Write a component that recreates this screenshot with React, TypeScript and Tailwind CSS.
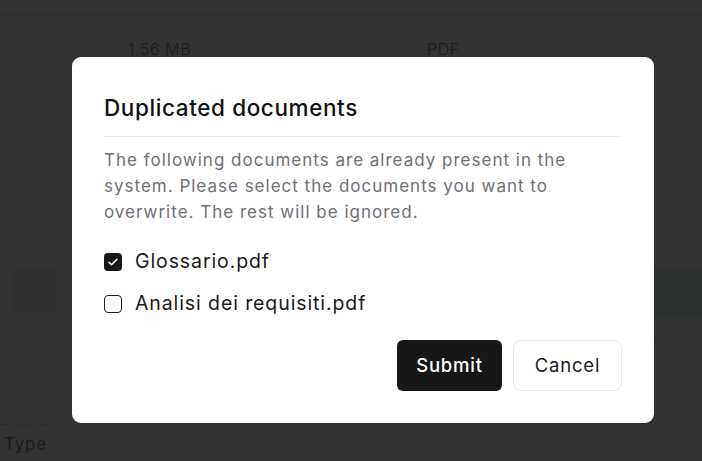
import React, { useState } from 'react';

const docs = [
  { name: 'Glossario.pdf', checked: true },
  { name: 'Analisi dei requisiti.pdf', checked: false },
];

function Check({ checked }: { checked: boolean }) {
  if (checked) {
    return (
      <span className="flex h-[18px] w-[18px] items-center justify-center rounded-[4px] bg-[#171717]">
        <svg width="12" height="12" viewBox="0 0 24 24" fill="none" stroke="white" strokeWidth="3" strokeLinecap="round" strokeLinejoin="round">
          <path d="M4 12.5l5 5L20 6.5" />
        </svg>
      </span>
    );
  }
  return <span className="block h-[18px] w-[18px] rounded-[4px] border-[1.5px] border-[#1f1f1f]" />;
}

export default function App() {
  const [items, setItems] = useState(docs);

  return (
    <div className="relative h-[461px] w-[702px] overflow-hidden bg-white font-['Inter',sans-serif] text-[#111]">
      {/* page behind the overlay */}
      <div className="h-[16px] border-b border-[#e6e6e6]" />
      <div className="flex h-[66px] items-center text-[16px] font-light tracking-[0.6px] text-[#888]">
        <span className="ml-[128px] w-[299px]">1.56 MB</span>
        <span>PDF</span>
      </div>
      <div className="mt-[186px] flex h-[50px] items-stretch">
        <div className="ml-[12px] w-[51px] rounded-lg bg-[#f2f2f2]" />
        <div className="ml-auto w-[300px] bg-[#e6f2f7]" />
      </div>
      <div className="mt-[21px] h-[85px] border-t border-[#e8e8e8]" />
      <div className="flex h-[40px] w-[62px] items-center rounded-tr-md border-r border-t border-dashed border-[#d4d4d4] pl-[4px] text-[17px] tracking-[0.8px] text-[#888]">
        Type
      </div>

      <div className="absolute inset-0 bg-black/80" />

      <div className="absolute left-[72px] top-[57px] w-[582px] rounded-[9px] bg-white px-[32px] pb-[32px] pt-[37px]">
        <h2 className="border-b border-[#ececec] pb-[14px] text-[22.5px] font-medium leading-[28px] tracking-[0.6px] text-[#111]">
          Duplicated documents
        </h2>
        <p className="mt-[10px] text-[17px] leading-[26px] tracking-[1px] text-[#6f6f76]">
          The following documents are already present in the system. Please select the documents you want to overwrite. The rest will be ignored.
        </p>
        <div className="mt-[23px] flex flex-col gap-[14px]">
          {items.map((d, i) => (
            <label
              key={d.name}
              className="flex h-[28px] cursor-pointer items-center gap-[13px]"
              onClick={() => setItems(items.map((x, j) => (j === i ? { ...x, checked: !x.checked } : x)))}
            >
              <Check checked={d.checked} />
              <span className="text-[19.5px] tracking-[0.9px] text-[#1a1a1a]">{d.name}</span>
            </label>
          ))}
        </div>
        <div className="mt-[22px] flex justify-end gap-[11px]">
          <button className="h-[51px] w-[105px] rounded-[6px] bg-[#171717] text-[18.5px] font-medium tracking-[0.8px] text-white">
            Submit
          </button>
          <button className="h-[51px] w-[109px] rounded-[8px] border border-[#e6e6e6] bg-white text-[18.5px] tracking-[0.8px] text-[#1a1a1a]">
            Cancel
          </button>
        </div>
      </div>
    </div>
  );
}
